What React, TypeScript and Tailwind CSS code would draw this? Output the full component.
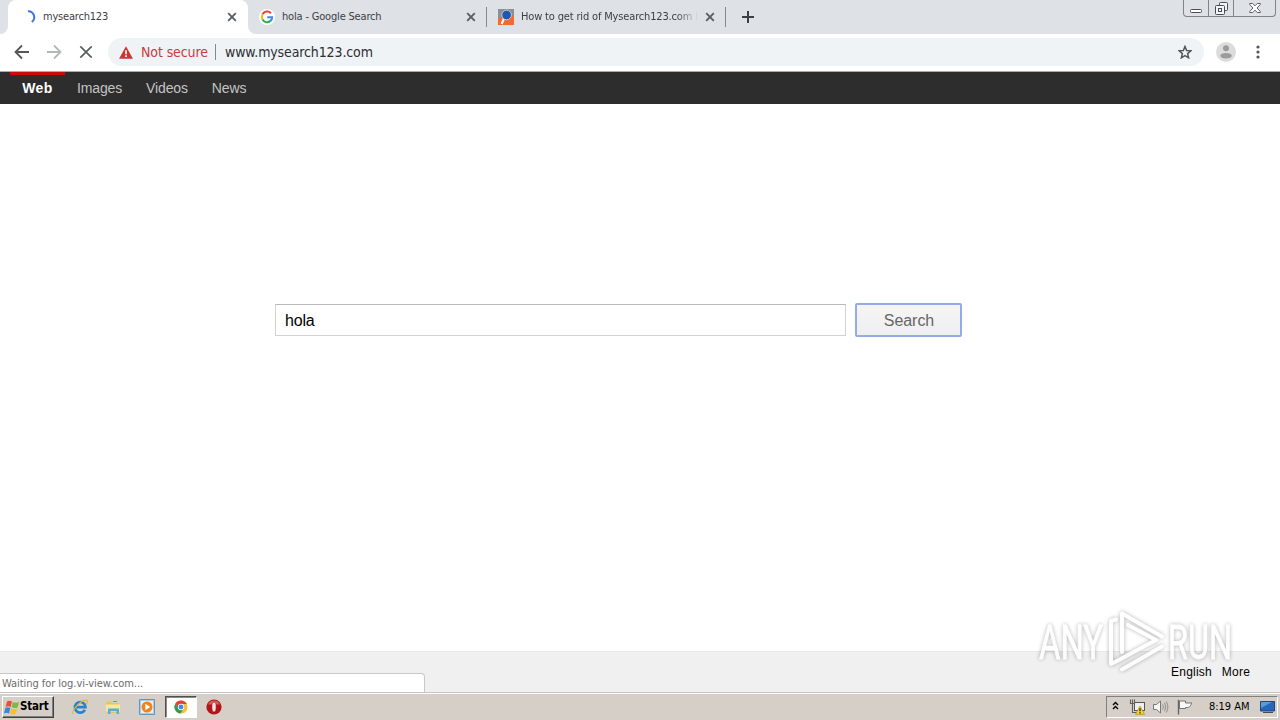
import type { ReactNode } from "react";
import clsx from "clsx";

const navLinks = ["Images", "Videos", "News"];

function CloseIcon({ className }: { className?: string }) {
  return (
    <svg viewBox="0 0 10 10" className={clsx("h-[10px] w-[10px] shrink-0", className)}>
      <path d="M1.2 1.2l7.6 7.6M8.8 1.2l-7.6 7.6" stroke="#5a5e63" strokeWidth="1.9" />
    </svg>
  );
}

function GoogleIcon() {
  return (
    <svg viewBox="0 0 16 16" className="h-4 w-4 shrink-0">
      <circle cx="8" cy="8" r="8" fill="#fff" />
      <g fill="none" strokeWidth="2.1">
        <path d="M12 4.2A5.2 5.2 0 0 0 3.5 5.4" stroke="#ea4335" />
        <path d="M3.5 5.4a5.3 5.3 0 0 0 0 5.2" stroke="#fbbc05" />
        <path d="M3.5 10.6a5.2 5.2 0 0 0 8 1.3" stroke="#34a853" />
        <path d="M11.5 11.9A5 5 0 0 0 13.1 8.2H8.2" stroke="#4285f4" />
      </g>
    </svg>
  );
}

function MagnifierIcon() {
  return (
    <svg viewBox="0 0 16 16" className="h-4 w-4 shrink-0">
      <path d="M0 0h16v16H0z" fill="#f26a2e" />
      <path d="M0 0h16v7L0 9z" fill="#8d8f94" />
      <path d="M3.6 15L6 9.5" stroke="#fff" strokeWidth="2.2" />
      <circle cx="8.6" cy="6" r="4.8" fill="#1d57ae" stroke="#c9d4e4" strokeWidth=".9" />
    </svg>
  );
}

function TabStrip() {
  return (
    <div className="flex h-[34px] bg-[#dee1e6] text-[11px] text-[#3c4043]">
      <div className="flex h-[34px] w-2 items-end bg-white">
        <div className="h-full w-2 rounded-br-lg bg-[#dee1e6]" />
      </div>
      <div className="flex w-60 items-center rounded-t-lg bg-white pr-[11px] pl-[13px]">
        <svg viewBox="0 0 16 16" className="h-4 w-4 shrink-0">
          <path d="M7 2.2a6 6 0 0 1 3.8 10.8" fill="none" stroke="#3b78d8" strokeWidth="2" />
        </svg>
        <span className="mt-px ml-1.5 tracking-[-0.2px]">mysearch123</span>
        <CloseIcon className="ml-auto" />
      </div>
      <div className="w-2 bg-white">
        <div className="h-full rounded-bl-lg bg-[#dee1e6]" />
      </div>
      <div className="flex w-[231px] items-center border-r border-transparent pr-2.5 pl-[3px]">
        <GoogleIcon />
        <span className="mt-px ml-[7px] tracking-[-0.18px]">hola - Google Search</span>
        <CloseIcon className="ml-auto" />
      </div>
      <div className="flex w-[239px] items-center">
        <div className="-ml-px h-5 w-px bg-[#85888d]" />
        <div className="ml-[11px] flex items-center">
          <MagnifierIcon />
        </div>
        <span className="mt-px ml-[7px] w-[177px] overflow-hidden whitespace-nowrap tracking-[-0.16px] [mask-image:linear-gradient(to_right,black_88%,transparent)]">
          How to get rid of Mysearch123.com b
        </span>
        <CloseIcon className="ml-[7px]" />
      </div>
      <div className="mt-[7px] -ml-px h-5 w-px bg-[#85888d]" />
      <svg viewBox="0 0 12 12" className="mt-[11px] ml-4 h-3 w-3">
        <path d="M6 0v12M0 6h12" stroke="#3c4043" strokeWidth="2" />
      </svg>
      <div className="mr-1 ml-auto flex h-[17px] w-[93px] rounded-b-[4px] border border-t-0 border-[#7e848c]">
        <div className="flex w-[25px] items-end justify-center border-r border-[#7e848c] pb-[3px]">
          <svg viewBox="0 0 12 4" className="h-1 w-3">
            <rect x=".5" y=".5" width="11" height="3" rx="1" fill="#fff" stroke="#484d55" />
          </svg>
        </div>
        <div className="flex w-[25px] justify-center border-r border-[#7e848c] pt-[2px]">
          <svg viewBox="0 0 13 13" className="h-[13px] w-[13px]" fill="#f4f5f7" stroke="#484d55">
            <rect x="4.5" y=".5" width="8" height="8" rx="1" />
            <rect x=".5" y="3.5" width="9" height="9" rx="1" />
            <rect x="3.5" y="6.5" width="3" height="3" />
          </svg>
        </div>
        <div className="flex flex-1 justify-center pt-[3px]">
          <svg viewBox="0 0 12 10" className="h-2.5 w-3">
            <path
              d="M.7.5h3L6 2.8 8.3.5h3v1L8 5l3.3 3.5v1h-3L6 7.2 3.7 9.5h-3v-1L4 5 .7 1.5z"
              fill="#fff"
              stroke="#484d55"
              strokeWidth=".9"
            />
          </svg>
        </div>
      </div>
    </div>
  );
}

function Toolbar() {
  return (
    <div className="flex h-[38px] items-center border-b border-[#a9abad] bg-white pb-px pl-[14px]">
      <svg viewBox="0 0 16 16" className="h-4 w-4" fill="none" stroke="#53575b" strokeWidth="1.8">
        <path d="M15 8H2M8 1.5L1.5 8 8 14.5" />
      </svg>
      <svg viewBox="0 0 16 16" className="ml-4 h-4 w-4" fill="none" stroke="#b4b6b9" strokeWidth="1.8">
        <path d="M1 8h13M8 1.5L14.5 8 8 14.5" />
      </svg>
      <svg viewBox="0 0 14 14" className="ml-[17px] h-3.5 w-3.5">
        <path d="M1.3 1.3l11.4 11.4M12.7 1.3L1.3 12.7" stroke="#5a5e62" strokeWidth="1.7" />
      </svg>
      <div className="ml-[15px] flex h-7 w-[1096px] items-center rounded-full bg-[#f0f3f5] pr-[11px] pl-[11px] text-[14px]">
        <svg viewBox="0 0 14 13" className="h-[13px] w-3.5">
          <path d="M7 .3L14 12.7H0z" fill="#d13438" />
          <path d="M7 4.3v4M7 9.3v1.8" stroke="#fff" strokeWidth="1.6" />
        </svg>
        <span className="ml-2 w-[74px] whitespace-nowrap tracking-[-0.1px] text-[#cb3a3e]">Not secure</span>
        <div className="h-4 w-px bg-[#85898d]" />
        <span className="ml-[9px] tracking-[-0.12px] text-[#2b2e33]">www.mysearch123.com</span>
        <svg viewBox="0 0 24 24" className="mr-px ml-auto h-3.5 w-3.5">
          <path
            d="M12 2.5l2.8 6.8 7.3.6-5.6 4.8 1.7 7.2L12 18.1l-6.2 3.8 1.7-7.2L1.9 9.9l7.3-.6z"
            fill="none"
            stroke="#53575b"
            strokeWidth="2.6"
          />
        </svg>
      </div>
      <svg viewBox="0 0 20 20" className="ml-3 h-5 w-5">
        <circle cx="10" cy="10" r="10" fill="#dcdcdc" />
        <circle cx="10" cy="6.2" r="3" fill="#9b9b9b" />
        <ellipse cx="10" cy="13.8" rx="5.8" ry="2.8" fill="#9b9b9b" />
      </svg>
      <svg viewBox="0 0 4 14" className="ml-5 h-3.5 w-1" fill="#54585c">
        <circle cx="2" cy="2" r="1.6" />
        <circle cx="2" cy="7" r="1.6" />
        <circle cx="2" cy="12" r="1.6" />
      </svg>
    </div>
  );
}

function NavBar() {
  return (
    <nav className="flex h-8 bg-[#2d2d2d] pl-2.5 font-['Liberation_Sans',Arial,sans-serif] text-[14px] leading-8 text-[#c4c4c4]">
      <a className="h-8 w-[55px] border-t-[3px] border-[#cc0a0a] text-center leading-[26px] font-bold tracking-[0.4px] text-white">
        Web
      </a>
      {navLinks.map((label) => (
        <a key={label} className="px-3 tracking-[-0.14px]">
          {label}
        </a>
      ))}
    </nav>
  );
}

function Watermark() {
  return (
    <svg
      viewBox="0 0 204 72"
      className="absolute top-[605px] left-[1034px] h-[72px] w-[204px] opacity-85 drop-shadow-[0_0_2px_rgba(0,0,0,0.35)]"
    >
      <g fill="#fff" stroke="#fff" strokeWidth=".8" fontFamily="Roboto, sans-serif" fontSize="49">
        <text x="5" y="54" textLength="64" lengthAdjust="spacingAndGlyphs">ANY</text>
        <text x="134" y="54" textLength="64" lengthAdjust="spacingAndGlyphs">RUN</text>
      </g>
      <g fill="none" stroke="#fff" strokeWidth="4" strokeLinecap="round" strokeLinejoin="round">
        <path d="M88 47V8.500L128 31.500" />
        <path d="M82 14.500L77 16V59L82 56.500L122 35L94 20" />
        <path d="M88 64.500L128 41.500" />
      </g>
    </svg>
  );
}

function WindowsFlag() {
  return (
    <svg viewBox="0 0 16 15" className="h-[15px] w-4">
      <path d="M3 1.5C5 .3 6.500.7 8 1.6L6.700 7C5 6 3.500 6 1.600 7z" fill="#e8512b" />
      <path d="M8.800 2c2 1 4 1.100 6.200 0l-1.500 5.400c-2 1-3.700.9-5.900-.1z" fill="#7dbb38" />
      <path d="M1.300 8c1.900-1 3.400-.9 5.100.1L5 13.400c-1.700-1-3.200-1-5 0z" fill="#3a86d8" />
      <path d="M7.300 8.400c2.100 1 3.900 1 5.900 0l-1.400 5.300c-1.900 1.100-3.800 1-5.900 0z" fill="#f5c326" />
    </svg>
  );
}

function QuickIcon({ children, className }: { children: ReactNode; className?: string }) {
  return (
    <svg viewBox="0 0 16 16" className={clsx("h-4 w-4 shrink-0", className)}>
      {children}
    </svg>
  );
}

function Taskbar() {
  return (
    <div className="flex h-7 items-center border-t border-[#c5c4c2] bg-[#d6cfc8] font-['DejaVu_Sans_Condensed','DejaVu_Sans',sans-serif] shadow-[inset_0_1px_0_#fff]">
      <button className="mt-px ml-[2px] flex h-[22px] w-[52px] items-center border border-t-white border-r-[#404040] border-b-[#404040] border-l-white pl-px shadow-[inset_-1px_-1px_0_#808080]">
        <WindowsFlag />
        <span className="text-[11.5px] font-bold tracking-[-0.2px] text-black">Start</span>
      </button>

      <QuickIcon className="ml-[18px]">
        <path d="M12.900 10.800A5.300 5.300 0 1 1 13.500 8.200H4.500" fill="none" stroke="#2384d4" strokeWidth="2.7" />
        <path d="M1.200 14.800C-1 12 10-.5 15 1.400c1 1-.2 3-1 4" fill="none" stroke="#e7b72d" strokeWidth="1.2" />
      </QuickIcon>
      <QuickIcon className="ml-[17px]">
        <path d="M1 2.500h5l1 1.500h7.500v10H1z" fill="#e6c75f" />
        <path d="M1 5.500h14v7H1z" fill="#f7e79f" />
        <path d="M3 15V9.500h11V15h-2.500v-3h-6v3z" fill="#57afd9" />
        <path d="M8 2.500h4" stroke="#54b077" />
      </QuickIcon>
      <QuickIcon className="ml-[18px]">
        <path d="M.5.5h15v15H.5z" fill="#a7cdec" stroke="#6096c6" />
        <path d="M2 2h12v12H2z" fill="#e5f0f8" />
        <circle cx="8" cy="8" r="5.5" fill="#f38316" />
        <path d="M6.300 4.800v6.400L11.300 8z" fill="#fff" />
      </QuickIcon>
      <div className="mt-px ml-2.5 flex h-[22px] w-8 items-center justify-center border border-t-[#505050] border-r-white border-b-white border-l-[#505050] bg-white shadow-[inset_1px_1px_0_#8a8a8a]">
        <svg viewBox="0 0 16 16" className="h-3.5 w-3.5">
          <circle cx="8" cy="8" r="7.5" fill="#f7c52b" />
          <path d="M1.500 4.200A7.500 7.500 0 0 1 14.600 4.500H8a3.700 3.700 0 0 0-3.300 5z" fill="#dc4437" />
          <path d="M1.500 4.200A7.500 7.500 0 0 0 7.500 15.500l3.300-5.200a3.700 3.700 0 0 1-6-.7z" fill="#2b9c56" />
          <circle cx="8" cy="8" r="3.6" fill="#fff" />
          <circle cx="8" cy="8" r="2.8" fill="#4285f4" />
        </svg>
      </div>
      <QuickIcon className="ml-[9px]">
        <circle cx="8" cy="8" r="7.6" fill="#b51318" />
        <path d="M2 5.500a6.500 6.500 0 0 1 12 0z" fill="#d95b58" />
        <ellipse cx="8" cy="8" rx="2.2" ry="5" fill="#f1e3df" stroke="#8f0e10" strokeWidth=".6" />
      </QuickIcon>

      <div className="mt-px mr-0.5 ml-auto flex h-[22px] w-[172px] items-center border border-t-[#808080] border-r-white border-b-white border-l-[#808080] pl-[5px]">
        <svg viewBox="0 0 7 9" className="mb-[3px] h-[9px] w-[7px]" fill="none" stroke="#000" strokeWidth="1.4">
          <path d="M1 4l2.500-2.500L6 4M1 8l2.500-2.500L6 8" />
        </svg>
        <QuickIcon className="ml-2.5">
          <rect x="5.500" y="3.500" width="10" height="8" fill="#efefef" stroke="#55585a" />
          <path d="M1.500 .5v4h4v-4M3.500 .5v13h4M6 13.500h4" fill="none" stroke="#5e605e" strokeWidth="1.1" />
          <path d="M11 7l4.600 8.400H6.400z" fill="#f6d31c" stroke="#a68b12" strokeWidth=".6" />
          <path d="M11 9.300v3M11 13.200v1.200" stroke="#111" strokeWidth="1.2" />
        </QuickIcon>
        <QuickIcon className="ml-2">
          <path d="M.5 5.500h3L7.500 2v12l-4-3.500h-3z" fill="#f6f6f6" stroke="#777" />
          <path
            d="M9.500 5.500q2 2.500 0 5M11.500 3.800q2.600 4.200 0 8.400M13.300 2.500q3.200 5.500 0 11"
            fill="none"
            stroke="#888"
            strokeWidth=".9"
          />
        </QuickIcon>
        <QuickIcon className="ml-2">
          <path d="M1.500 .8v14.700" stroke="#666" strokeWidth="1.4" />
          <path d="M2.500 2h6v2h6.500c-1.500 1.500-1 4-4.500 4.500h-2V9.500h-6z" fill="#f8f8f8" stroke="#666" strokeWidth=".9" />
        </QuickIcon>
        <span className="mt-px ml-4 w-[42px] whitespace-nowrap text-[11px] tracking-[-0.02px] text-black">8:19 AM</span>
        <svg viewBox="0 0 15 13" className="ml-[9px] h-[13px] w-[15px]">
          <path d="M.5.5h14v9.500H.5z" fill="#2467bd" stroke="#23466f" />
          <path d="M1 1h11L1 7z" fill="#5a9ade" />
          <path d="M3 11.500h10" stroke="#474c52" />
        </svg>
      </div>
    </div>
  );
}

export default function App() {
  return (
    <div className="relative flex h-[720px] w-[1280px] flex-col overflow-hidden bg-white font-['DejaVu_Sans_Condensed','DejaVu_Sans',sans-serif]">
      <TabStrip />
      <Toolbar />
      <NavBar />

      <main className="flex flex-1 items-start pt-[199px] pl-[275px] font-['Liberation_Sans',Arial,sans-serif] text-base">
        <input
          defaultValue="hola"
          className="mt-px h-8 w-[571px] border border-[#d2d2d2] border-t-[#b9b9b9] px-[9px] pt-px tracking-[-0.2px] text-black outline-none"
        />
        <button className="ml-[9px] h-[34px] w-[107px] rounded-[2px] border-2 border-[#91ace8] bg-linear-to-b from-[#f5f5f5] to-[#efefef] pt-px pl-px tracking-[-0.05px] text-[#666]">
          Search
        </button>
      </main>

      <footer className="flex h-[41px] items-end justify-between border-t border-[#e8e8e8] bg-[#f0f0f0]">
        <div className="h-[19px] w-[425px] rounded-tr-[4px] border-t border-r border-[#c8c8c8] bg-white pl-[2px] text-[11px] leading-5 tracking-[-0.05px] text-[#6c6c6c]">
          Waiting for log.vi-view.com...
        </div>
        <div className="flex gap-2.5 pr-[30px] pb-3 font-['Liberation_Sans',Arial,sans-serif] text-xs leading-4 tracking-[0.2px] text-black">
          <a>English</a>
          <a>More</a>
        </div>
      </footer>

      <Taskbar />
      <Watermark />
    </div>
  );
}
